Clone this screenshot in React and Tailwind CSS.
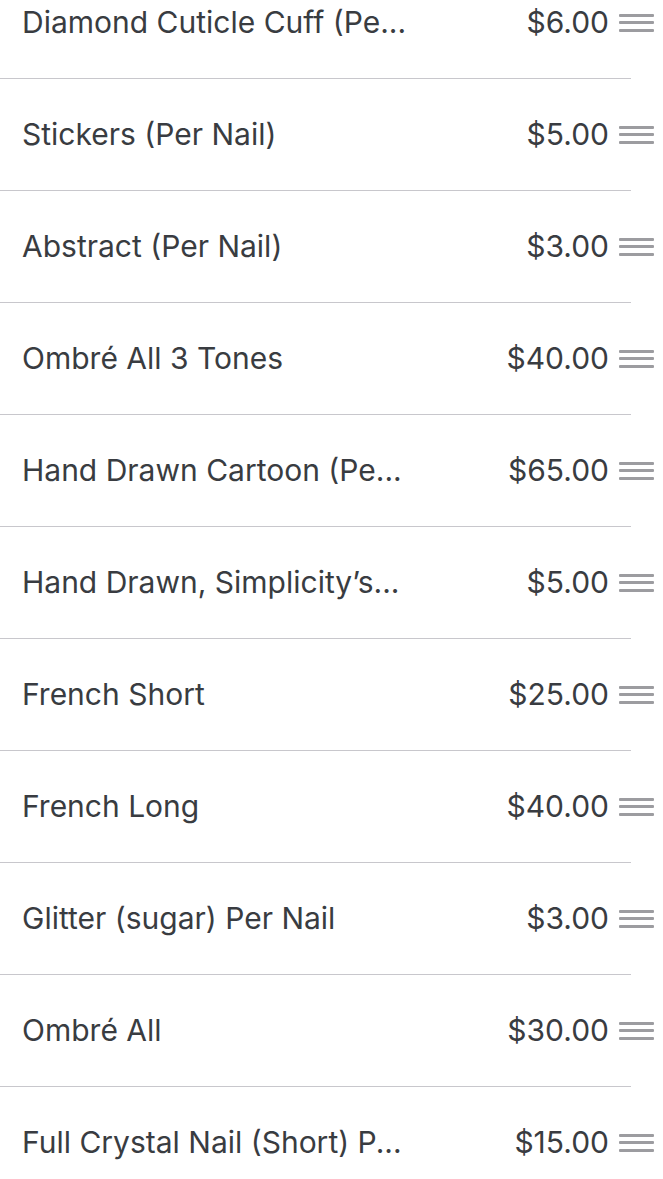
const items = [
  ["Diamond Cuticle Cuff (Pe...", "$6.00"],
  ["Stickers (Per Nail)", "$5.00"],
  ["Abstract (Per Nail)", "$3.00"],
  ["Ombré All 3 Tones", "$40.00"],
  ["Hand Drawn Cartoon (Pe...", "$65.00"],
  ["Hand Drawn, Simplicity’s...", "$5.00"],
  ["French Short", "$25.00"],
  ["French Long", "$40.00"],
  ["Glitter (sugar) Per Nail", "$3.00"],
  ["Ombré All", "$30.00"],
  ["Full Crystal Nail (Short) P...", "$15.00"],
];

function Grip() {
  return (
    <div className="flex flex-col gap-[4.5px] w-[35px] ml-[10px] shrink-0">
      <div className="h-[3px] bg-[#9c9ca0] rounded-[1px]" />
      <div className="h-[3px] bg-[#9c9ca0] rounded-[1px]" />
      <div className="h-[3px] bg-[#9c9ca0] rounded-[1px]" />
    </div>
  );
}

export default function App() {
  return (
    <div
      className="w-[663px] h-[1179px] overflow-hidden bg-white"
      style={{ fontFamily: 'Inter, "Liberation Sans", sans-serif' }}
    >
      <div className="-mt-[33px]">
        {items.map(([name, price], i) => (
          <div key={i}>
            <div className="flex items-center h-[111px] pl-[22px] pr-[9px] text-[#393c41] text-[30px]">
              <div className="flex-1 min-w-0 whitespace-nowrap">{name}</div>
              <div className="shrink-0">{price}</div>
              <Grip />
            </div>
            <div className="h-px w-[631px] bg-[#c8c7cc]" />
          </div>
        ))}
      </div>
    </div>
  );
}
